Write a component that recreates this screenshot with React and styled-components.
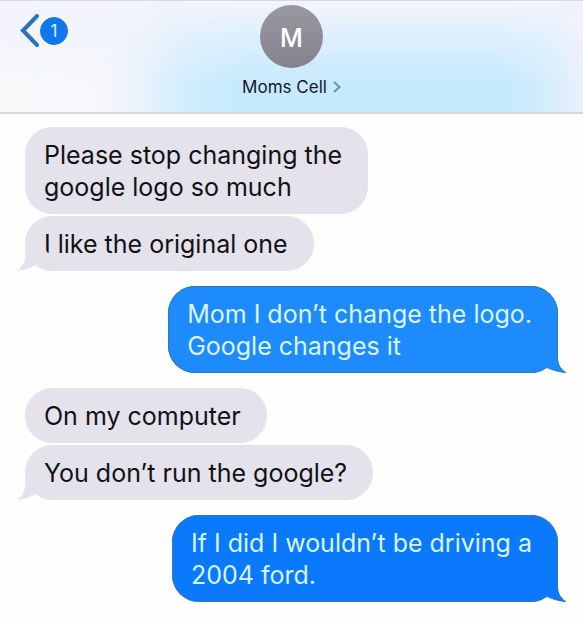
import styled, { createGlobalStyle } from "styled-components";

const GlobalStyle = createGlobalStyle`
  * {
    box-sizing: border-box;
  }
  body {
    margin: 0;
    background-color: #fefefe;
    font-family: Inter, "Liberation Sans", sans-serif;
  }
  button {
    all: unset;
    box-sizing: border-box;
    cursor: pointer;
  }
`;

const Header = styled.header`
  display: grid;
  grid-template-columns: 1fr auto 1fr;
  align-items: start;
  height: 114px;
  padding: 4px 20px 0;
  border-top: 1px solid #d9dadd;
  border-bottom: 2px solid #d3d8db;
  background:
    linear-gradient(to bottom, #f3f4fb 0%, rgba(240, 243, 252, 0.6) 30%, rgba(240, 243, 252, 0) 75%),
    linear-gradient(to right, #f8f8fa 0%, #f6f7fc 18%, #e9f2fd 24%, #d0edfd 32%, #c5eafd 42%, #c5eafd 86%, #d3edfd 94%, #eeeffc 100%);
`;

const BackButton = styled.button`
  display: flex;
  align-items: center;
  justify-self: start;
  gap: 1px;
  margin-top: 8px;
`;

const Badge = styled.span`
  width: 28px;
  height: 28px;
  border-radius: 50%;
  background-color: #0e78ee;
  border: 1px solid #2a72c4;
  color: #d9f4ff;
  font-size: 17px;
  line-height: 26px;
  text-align: center;
`;

const Contact = styled.button`
  display: flex;
  flex-direction: column;
  align-items: center;
  gap: 8px;
`;

const Avatar = styled.span`
  width: 63px;
  height: 63px;
  border-radius: 50%;
  background: linear-gradient(#9a98a1, #85828c);
  color: #fff;
  font-size: 25px;
  font-weight: 500;
  line-height: 66px;
  text-align: center;
`;

const Name = styled.span`
  display: flex;
  align-items: center;
  gap: 6px;
  color: #15191d;
  font-size: 17px;
  line-height: 22px;
`;

const Thread = styled.main`
  display: flex;
  flex-direction: column;
  gap: 15px;
  padding: 13px 25px 18px;
`;

const Group = styled.section`
  display: flex;
  flex-direction: column;
  align-items: ${({ $mine }) => ($mine ? "flex-end" : "flex-start")};
  gap: 2px;
`;

const Bubble = styled.p`
  position: relative;
  margin: 0;
  padding: 12px 26px 11px 19px;
  border-radius: 27px;
  background-color: ${({ $color }) => $color};
  box-shadow: ${({ $mine }) => ($mine ? "inset 0 0 0 1px #3276bd" : "none")};
  color: ${({ $mine }) => ($mine ? "#d9f5ff" : "#121216")};
  font-size: 25px;
  line-height: 32px;
  white-space: pre-line;
`;

const TailSvg = styled.svg`
  position: absolute;
  bottom: 0;
  ${({ $mine }) => ($mine ? "right: -8px; transform: scaleX(-1);" : "left: -8px;")}
`;

const Tail = ({ mine, color }) => (
  <TailSvg $mine={mine} width="32" height="28" viewBox="0 0 32 28" aria-hidden="true">
    <path d="M8 0V13C8 19 6 23 0 28C8 27 14 25 19 22L31 9Z" fill={color} />
    {mine && (
      <path
        d="M8.500 0V13C8.500 19 6.500 23 0.500 27.500C8 26.500 14 25 19 22.500"
        fill="none"
        stroke="#3276bd"
      />
    )}
  </TailSvg>
);

const groups = [
  {
    id: 1,
    color: "#e4e2ea",
    messages: ["Please stop changing the\ngoogle logo so much", "I like the original one"],
  },
  {
    id: 2,
    mine: true,
    color: "#1e8bfc",
    messages: ["Mom I don’t change the logo.\nGoogle changes it"],
  },
  {
    id: 3,
    color: "#e4e2ea",
    messages: ["On my computer", "You don’t run the google?"],
  },
  {
    id: 4,
    mine: true,
    color: "#0a79fc",
    messages: ["If I did I wouldn’t be driving a\n2004 ford."],
  },
];

const App = () => {
  return (
    <>
      <GlobalStyle />
      <Header>
        <BackButton aria-label="Back, 1 unread">
          <svg width="19" height="35" viewBox="0 0 19 35" fill="none" aria-hidden="true">
            <path
              d="M17 3L3 17.500L17 32"
              stroke="#2674bd"
              strokeWidth="4"
              strokeLinecap="round"
              strokeLinejoin="miter"
            />
          </svg>
          <Badge>1</Badge>
        </BackButton>
        <Contact>
          <Avatar>M</Avatar>
          <Name>
            Moms Cell
            <svg width="8" height="12" viewBox="0 0 8 12" fill="none" aria-hidden="true">
              <path d="M1 1L6.500 6L1 11" stroke="#75909f" strokeWidth="2" />
            </svg>
          </Name>
        </Contact>
      </Header>
      <Thread>
        {groups.map(({ id, mine, color, messages }) => (
          <Group key={id} $mine={mine}>
            {messages.map((text, i) => (
              <Bubble key={text} $mine={mine} $color={color}>
                {text}
                {i === messages.length - 1 && <Tail mine={mine} color={color} />}
              </Bubble>
            ))}
          </Group>
        ))}
      </Thread>
    </>
  );
};

export default App;
